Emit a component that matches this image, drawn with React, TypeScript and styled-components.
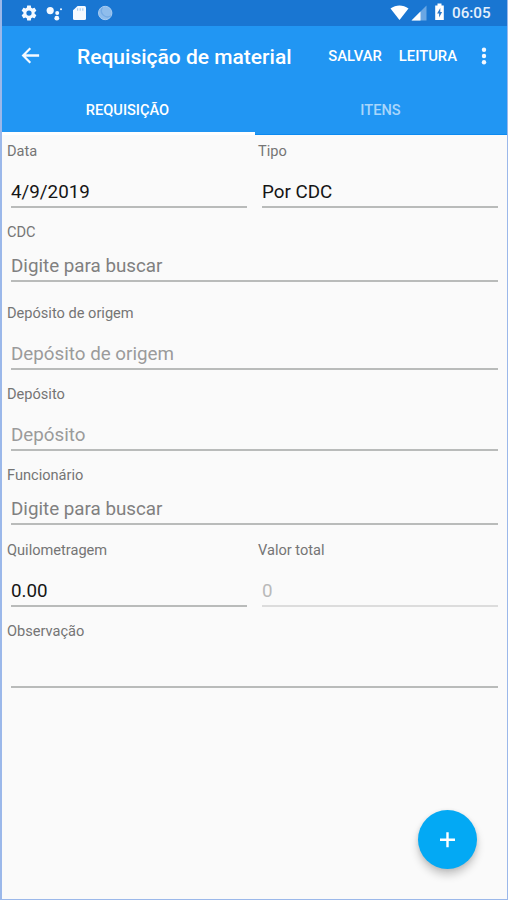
import React from "react";
import styled, { createGlobalStyle } from "styled-components";

const GlobalStyle = createGlobalStyle`
  * { box-sizing: border-box; }
  body { margin: 0; background: #fafafa; font-family: Roboto, sans-serif; }
  button { border: 0; padding: 0; background: none; font: inherit; color: inherit; }
`;

const Screen = styled.div`
  position: relative;
  display: flex;
  flex-direction: column;
  width: 508px;
  height: 900px;
  overflow: hidden;
  background: #fafafa;
  border: solid #9bb8ea;
  border-width: 0 1px 1px 2px;
`;

const StatusBar = styled.div`
  display: flex;
  align-items: center;
  height: 26px;
  margin: 0 -1px 0 -2px;
  padding: 0 17px 0 20px;
  flex: none;
  background: #1976d2;
  color: #fff;
`;

const StatusIcons = styled.div`
  display: flex;
  align-items: center;
  flex: 1;
  gap: 7.5px;
  svg { display: block; }
`;

const Signals = styled.div`
  display: flex;
  align-items: center;
  svg { display: block; }
`;

const Clock = styled.span`
  width: 39px;
  margin-left: 6px;
  font-size: 15.2px;
  font-weight: 500;
  line-height: 26px;
  white-space: nowrap;
  color: #e4f0fc;
`;

const AppBar = styled.header`
  flex: none;
  height: 109px;
  margin: 0 -1px 0 -2px;
  background: #2196f3;
  color: #fff;
  border-left: 2px solid #1a8df0;
  border-bottom: 1px solid #0c8af0;
`;

const Toolbar = styled.div`
  display: flex;
  align-items: center;
  height: 59px;
  padding: 0 14px 0 17px;
  svg { display: block; }
`;

const Title = styled.h1`
  flex: 1;
  margin: 2px 0 0 35px;
  font-size: 21px;
  font-weight: 500;
  line-height: 28px;
  white-space: nowrap;
`;

const Action = styled.button`
  margin-right: 17px;
  font-size: 14.8px;
  font-weight: 500;
  line-height: 20px;
`;

const Tabs = styled.nav`
  display: grid;
  grid-template-columns: 253px 1fr;
  height: 49px;
`;

const Tab = styled.button<{ $active?: boolean }>`
  padding-right: 2px;
  font-size: 14.6px;
  font-weight: 500;
  line-height: 50px;
  color: ${(p) => (p.$active ? "#fff" : "#a9d6fb")};
  box-shadow: ${(p) => (p.$active ? "inset 0 -3px #fff" : "none")};
`;

const Form = styled.main`
  display: flex;
  flex-direction: column;
  padding: 6px 8px 0 5px;
`;

const Row = styled.div<{ $height?: number }>`
  display: grid;
  grid-auto-flow: column;
  grid-auto-columns: 1fr;
  column-gap: 10px;
  height: ${(p) => p.$height ?? 81}px;
`;

const Label = styled.label`
  display: block;
  font-size: 14.6px;
  line-height: 20px;
  color: #757575;
`;

type Tone = "value" | "hint" | "light" | "disabled";
const tones: Record<Tone, string> = {
  value: "#151515",
  hint: "#808080",
  light: "#9b9b9b",
  disabled: "#b9b9b9",
};

const Input = styled.div<{ $tone: Tone; $compact?: boolean }>`
  display: flex;
  align-items: flex-end;
  height: ${(p) => (p.$compact ? 40 : 47)}px;
  margin: 0 1px 0 4px;
  padding-bottom: 2px;
  border-bottom: 2px solid ${(p) => (p.$tone === "disabled" ? "#dcdcdc" : "#b9bbba")};
  font-size: 18.8px;
  line-height: 23px;
  color: ${(p) => tones[p.$tone]};
`;

const Fab = styled.button`
  position: absolute;
  right: 30px;
  bottom: 30px;
  display: grid;
  place-items: center;
  width: 59px;
  height: 59px;
  border-radius: 50%;
  background: #03a9f4;
  color: #fff;
  box-shadow: 0 6px 9px rgba(0, 0, 0, 0.2), 0 1px 4px rgba(0, 0, 0, 0.1);
`;

interface FieldProps {
  label: string;
  text?: string;
  tone?: Tone;
  compact?: boolean;
}

const Field = ({ label, text, tone = "value", compact }: FieldProps) => (
  <div>
    <Label>{label}</Label>
    <Input $tone={tone} $compact={compact}>{text}</Input>
  </div>
);

const GearIcon = () => (
  <svg width="18" height="18" viewBox="0 0 24 24" fill="#f4f9ff">
    <path d="M19.43 12.98c.04-.32.07-.64.07-.98s-.03-.66-.07-.98l2.11-1.65c.19-.15.24-.42.12-.64l-2-3.46c-.12-.22-.39-.3-.61-.22l-2.49 1c-.52-.4-1.08-.73-1.69-.98l-.38-2.65C14.46 2.18 14.25 2 14 2h-4c-.25 0-.46.18-.49.42l-.38 2.65c-.61.25-1.17.59-1.69.98l-2.49-1c-.23-.09-.49 0-.61.22l-2 3.46c-.13.22-.07.49.12.64l2.11 1.65c-.04.32-.07.65-.07.98s.03.66.07.98l-2.11 1.65c-.19.15-.24.42-.12.64l2 3.46c.12.22.39.3.61.22l2.49-1c.52.4 1.08.73 1.69.98l.38 2.65c.03.24.24.42.49.42h4c.25 0 .46-.18.49-.42l.38-2.65c.61-.25 1.17-.59 1.69-.98l2.49 1c.23.09.49 0 .61-.22l2-3.46c.12-.22.07-.49-.12-.64l-2.11-1.65zM12 15.5a3.5 3.5 0 1 1 0-7 3.5 3.5 0 0 1 0 7z" />
  </svg>
);

const AssistantIcon = () => (
  <svg width="18" height="18" viewBox="0 0 18 18" fill="#f4f9ff">
    <circle cx="4.2" cy="6.6" r="3.6" />
    <circle cx="11.2" cy="9" r="2" />
    <circle cx="10.8" cy="14.2" r="2.4" />
    <circle cx="15" cy="5.2" r="1" />
  </svg>
);

const SdIcon = () => (
  <svg width="18" height="18" viewBox="0 0 18 18">
    <path d="M6.6 2H13.5a1.5 1.5 0 0 1 1.5 1.500v11A1.500 1.500 0 0 1 13.500 16H3.500a1.500 1.500 0 0 1-1.500-1.500V6.200z" fill="#f4f9ff" />
    <path d="M6.600 4.200v2.500M9.200 4.200v2.500M11.800 4.200v2.500" stroke="#a9cdf2" strokeWidth="1.200" />
  </svg>
);

const SyncIcon = () => (
  <svg width="18" height="18" viewBox="0 0 18 18">
    <circle cx="8.200" cy="9" r="6.700" fill="#8fbdec" stroke="#a9cdf2" strokeWidth="1" />
    <path d="M5.500 3.500a6 6 0 0 0 8.500 8.200" fill="none" stroke="#75abe4" strokeWidth="1.300" />
  </svg>
);

const SignalIcons = () => (
  <svg width="56" height="26" viewBox="0 0 56 26">
    <path d="M.5 8.600C6 4.400 13 4.400 18.500 8.600L9.500 20z" fill="#fff" />
    <path d="M36.500 5.500V20.500H21.500z" fill="#6aa7e4" />
    <path d="M30.500 11.500v9h-9z" fill="#fff" />
    <path d="M47.500 3.500h4v2h2.300v14.500h-8.600V5.500h2.300z" fill="#fff" />
    <path d="M50.300 8l-3.200 5.500h2v4l3-5.500h-1.800z" fill="#2d79c9" />
  </svg>
);

export default function App() {
  return (
    <>
      <GlobalStyle />
      <Screen>
        <StatusBar>
          <StatusIcons>
            <GearIcon />
            <AssistantIcon />
            <SdIcon />
            <SyncIcon />
          </StatusIcons>
          <Signals>
            <SignalIcons />
            <Clock>06:05</Clock>
          </Signals>
        </StatusBar>
        <AppBar>
          <Toolbar>
            <svg width="23" height="23" viewBox="0 0 24 24" fill="#f4f9ff">
              <path d="M21 10.700H7.200l5.400-5.400L11 3.700 2.700 12l8.300 8.300 1.600-1.600L7.200 13.300H21z" />
            </svg>
            <Title>Requisição de material</Title>
            <Action>SALVAR</Action>
            <Action>LEITURA</Action>
            <svg width="20" height="22" viewBox="0 0 20 22" fill="#f4f9ff">
              <circle cx="10" cy="4.700" r="2.200" />
              <circle cx="10" cy="11" r="2.200" />
              <circle cx="10" cy="17.300" r="2.200" />
            </svg>
          </Toolbar>
          <Tabs>
            <Tab $active>REQUISIÇÃO</Tab>
            <Tab>ITENS</Tab>
          </Tabs>
        </AppBar>
        <Form>
          <Row>
            <Field label="Data" text="4/9/2019" />
            <Field label="Tipo" text="Por CDC" />
          </Row>
          <Row>
            <Field label="CDC" text="Digite para buscar" tone="hint" compact />
          </Row>
          <Row>
            <Field label="Depósito de origem" text="Depósito de origem" tone="light" />
          </Row>
          <Row>
            <Field label="Depósito" text="Depósito" tone="light" />
          </Row>
          <Row $height={75}>
            <Field label="Funcionário" text="Digite para buscar" tone="hint" compact />
          </Row>
          <Row>
            <Field label="Quilometragem" text="0.00" />
            <Field label="Valor total" text="0" tone="disabled" />
          </Row>
          <Row>
            <Field label="Observação" />
          </Row>
        </Form>
        <Fab aria-label="Adicionar">
          <svg width="16" height="16" viewBox="0 0 16 16" stroke="#fff" strokeWidth="2.400">
            <path d="M7.500 .3v15M0 7.700h15" />
          </svg>
        </Fab>
      </Screen>
    </>
  );
}
